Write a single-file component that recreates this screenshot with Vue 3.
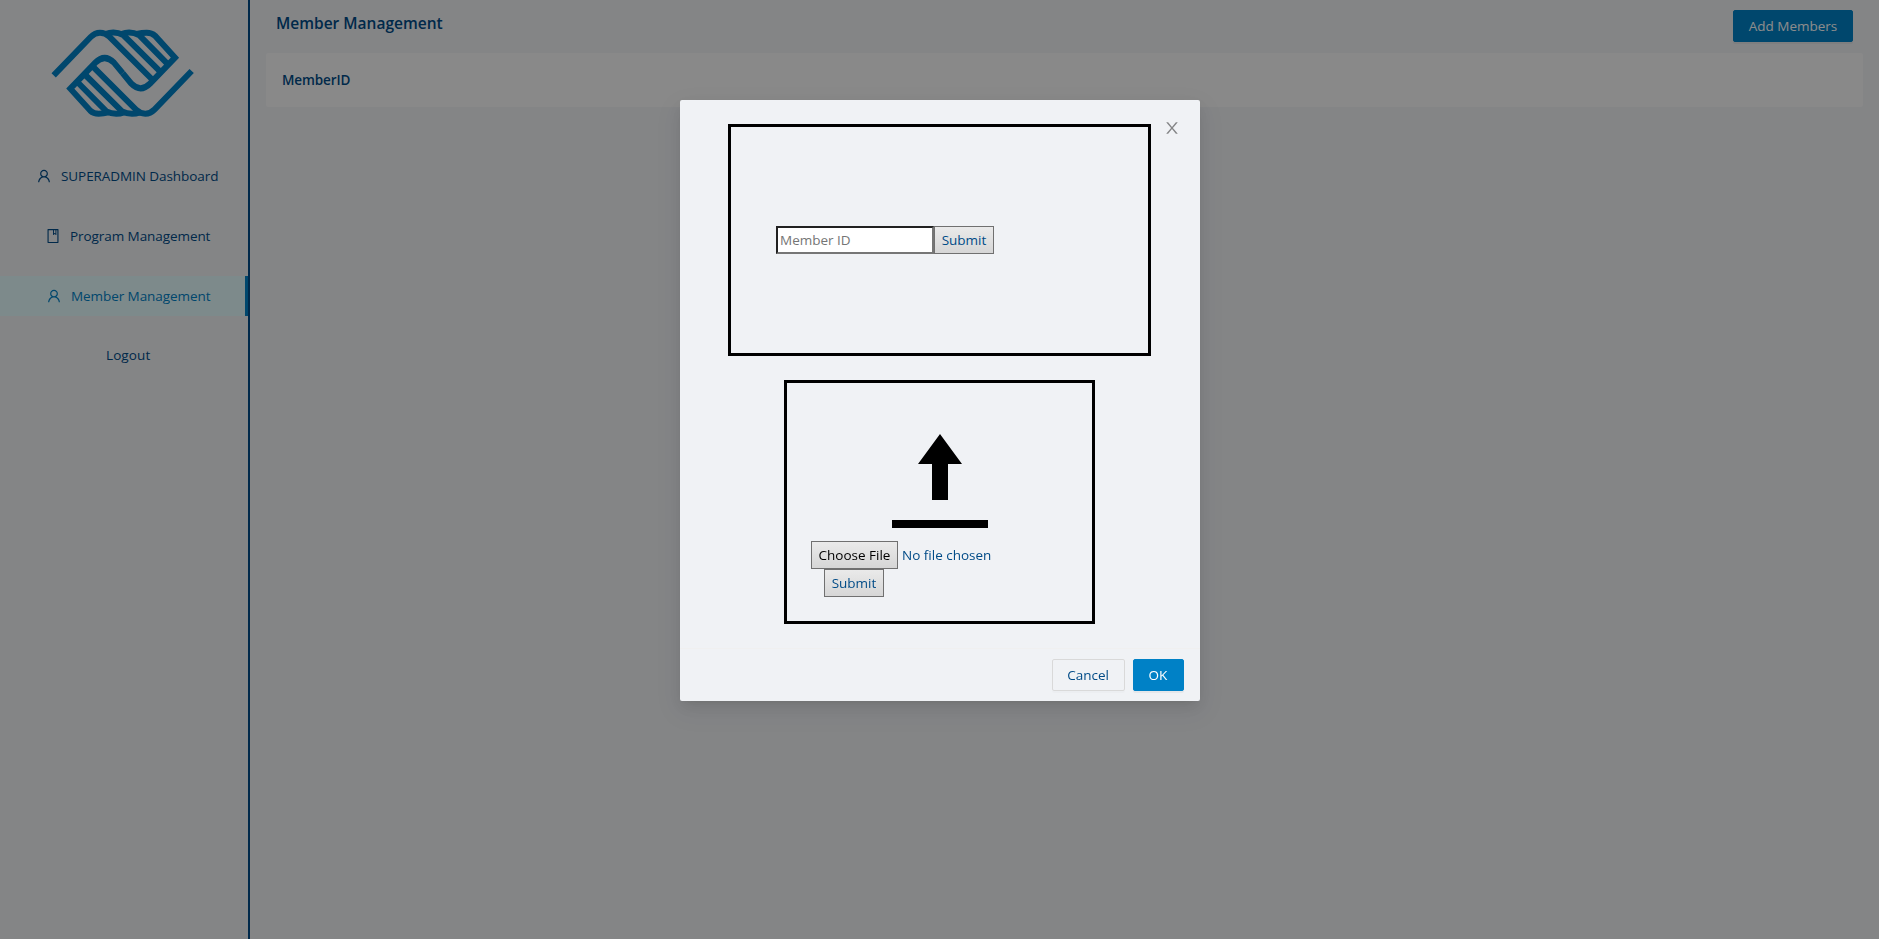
<script setup>
const navItems = [
  { label: 'SUPERADMIN Dashboard', icon: 'user', cls: 'dash' },
  { label: 'Program Management', icon: 'book', cls: 'prog' },
  { label: 'Member Management', icon: 'user', cls: 'memb', active: true },
  { label: 'Logout', cls: 'logout' },
]
</script>

<template>
  <div class="layout">
    <aside class="sider">
      <svg class="logo" viewBox="0 0 510 345" fill="none" stroke="#0081c6" stroke-width="18">
        <defs>
          <g id="hand">
            <path d="M41 181 L152 66 Q165 53 180 53 Q196 53 208 65 L335 192" />
            <path d="M196 57 Q224 47 250 60 L360 169" />
            <path d="M244 57 Q271 47 297 60 L384 148" />
            <path d="M290 57 Q306 53 320 53 Q335 53 345 62 L405 128 L330 206 Q302 234 274 206 L248 174.500" />
          </g>
        </defs>
        <use href="#hand" />
        <use href="#hand" transform="rotate(180 248 174.500)" />
      </svg>
      <nav class="menu">
        <a v-for="item in navItems" :key="item.label" class="item" :class="[item.cls, { active: item.active }]">
          <svg v-if="item.icon === 'user'" class="icon" viewBox="64 64 896 896" fill="currentColor">
            <path d="M858.500 763.600a374 374 0 0 0-80.600-119.500 375.630 375.630 0 0 0-119.500-80.600c-.4-.2-.8-.3-1.200-.5C719.500 518 760 444.700 760 362c0-137-111-248-248-248S264 225 264 362c0 82.700 40.500 156 102.800 201.100-.4.2-.8.3-1.200.5-44.800 18.900-85 46-119.500 80.600a375.630 375.630 0 0 0-80.600 119.500A371.700 371.700 0 0 0 136 901.800a8 8 0 0 0 8 8.200h60c4.400 0 7.900-3.500 8-7.800 2-77.200 33-149.500 87.800-204.300 56.700-56.700 132-87.900 212.200-87.900s155.500 31.200 212.200 87.900C779 752.700 810 825 812 902.200c.1 4.400 3.600 7.800 8 7.800h60a8 8 0 0 0 8-8.200c-1-47.800-10.900-94.300-29.500-138.200zM512 534c-45.900 0-89.100-17.900-121.600-50.400S340 407.900 340 362s17.900-89.100 50.400-121.600S466.100 190 512 190s89.100 17.900 121.600 50.400S684 316.100 684 362s-17.900 89.100-50.400 121.600S557.900 534 512 534z" />
          </svg>
          <svg v-else-if="item.icon === 'book'" class="icon" viewBox="64 64 896 896" fill="currentColor">
            <path d="M832 64H192c-17.700 0-32 14.300-32 32v832c0 17.700 14.300 32 32 32h640c17.700 0 32-14.300 32-32V96c0-17.700-14.300-32-32-32zm-260 72h96v209.900L621.500 312 572 347.400V136zm220 752H232V136h280v296.900c0 3.300 1 6.600 3 9.300a15.900 15.900 0 0 0 22.300 3.700l83.800-59.900 81.400 59.400c2.700 2 6 3.100 9.400 3.100 8.800 0 16-7.200 16-16V136h64v752z" />
          </svg>
          <span>{{ item.label }}</span>
        </a>
      </nav>
    </aside>

    <main class="main">
      <header class="header">
        <h1 class="title">Member Management</h1>
        <button class="btn primary add">Add Members</button>
      </header>
      <section class="table"><span class="th">MemberID</span></section>
    </main>

    <div class="mask">
      <div class="modal" role="dialog">
        <button class="close" aria-label="Close">
          <svg viewBox="64 64 896 896" fill="currentColor">
            <path d="M563.800 512l262.500-312.900c4.400-5.200.7-13.100-6.100-13.100h-79.800c-4.700 0-9.200 2.100-12.300 5.700L511.600 449.800 295.100 191.700c-3-3.600-7.500-5.700-12.300-5.700H203c-6.800 0-10.500 7.900-6.100 13.100L459.400 512 196.900 824.900A7.950 7.950 0 0 0 203 838h79.800c4.700 0 9.200-2.100 12.300-5.700l216.500-258.100 216.500 258.100c3 3.600 7.500 5.700 12.300 5.700h79.800c6.800 0 10.500-7.900 6.100-13.100L563.800 512z" />
          </svg>
        </button>
        <div class="body">
          <form class="id-box" @submit.prevent>
            <input class="id-input" type="text" placeholder="Member ID" />
            <button class="native submit">Submit</button>
          </form>
          <form class="file-box" @submit.prevent>
            <svg class="upload" viewBox="0 0 96 94">
              <path d="M48 0 70 30H56V66H40V30H26ZM0 86H96V94H0Z" />
            </svg>
            <div class="file-row">
              <button type="button" class="native choose">Choose File</button>
              <span class="nofile">No file chosen</span>
            </div>
            <button class="native submit second">Submit</button>
          </form>
        </div>
        <footer class="footer">
          <button class="btn cancel">Cancel</button>
          <button class="btn primary ok">OK</button>
        </footer>
      </div>
    </div>
  </div>
</template>

<style>
body { margin: 0; overflow: hidden; }
</style>

<style scoped>
.layout, .layout * { box-sizing: border-box; }
.layout {
  display: flex;
  height: 939px;
  background: #f0f2f5;
  color: #004b87;
  font: 13.5px/22px "Segoe UI", "Open Sans", "Noto Sans", sans-serif;
}
button, input { font: inherit; letter-spacing: inherit; margin: 0; white-space: nowrap; }

.sider { width: 250px; flex: none; border-right: 2px solid #004b87; }
.logo { display: block; width: 170px; height: 115px; margin: 15px 0 0 40px; }
.menu { display: flex; flex-direction: column; gap: 20px; margin-top: 26px; }
.item {
  display: flex;
  align-items: center;
  height: 40px;
  white-space: nowrap;
  letter-spacing: -.07px;
  border-right: 3px solid transparent;
}
.icon { width: 14px; height: 14px; margin-right: 10px; flex: none; }
.dash { padding-left: 37px; }
.prog { padding-left: 46px; }
.memb { padding-left: 47px; }
.logout { padding-left: 106px; margin-top: -1px; letter-spacing: .1px; }
.active { color: #0081c6; background: #e4fbfd; border-right-color: #0081c6; }

.main { flex: 1; padding: 0 16px; }
.header { display: flex; justify-content: space-between; height: 53px; padding: 10px 10px 0; }
.title { margin: 2px 0 0; font-size: 15.5px; line-height: 23px; font-weight: 600; }
.table {
  display: flex;
  align-items: center;
  height: 54px;
  padding: 0 16px;
  background: #fafafa;
  border-radius: 2px;
}
.th { font-weight: 600; letter-spacing: -.1px; }

.btn {
  height: 32px;
  padding: 0;
  border: 1px solid #d9d9d9;
  border-radius: 2px;
  background: #f0f2f5;
  color: #004b87;
  box-shadow: 0 2px 0 rgba(0, 0, 0, .016);
}
.primary { background: #0081c6; border-color: #0081c6; color: #fff; box-shadow: 0 2px 0 rgba(0, 0, 0, .045); }
.add { width: 120px; }
.cancel { width: 73px; }
.ok { width: 51px; }

.mask {
  position: fixed;
  inset: 0;
  padding-top: 100px;
  background: rgba(0, 0, 0, .45);
}
.modal {
  position: relative;
  width: 520px;
  height: 601px;
  margin: 0 auto;
  background: #f0f2f5;
  border-radius: 2px;
  box-shadow: 0 3px 6px -4px rgba(0, 0, 0, .12), 0 6px 16px rgba(0, 0, 0, .08), 0 9px 28px 8px rgba(0, 0, 0, .05);
}
.close {
  position: absolute;
  top: 0;
  right: 0;
  display: grid;
  place-items: center;
  width: 56px;
  height: 56px;
  padding: 0;
  border: 0;
  background: none;
  color: rgba(0, 0, 0, .45);
}
.close svg { width: 16px; height: 16px; }
.body {
  display: flex;
  flex-direction: column;
  align-items: center;
  gap: 24px;
  height: 548px;
  padding-top: 24px;
}
.id-box {
  display: flex;
  align-items: center;
  width: 423px;
  height: 232px;
  padding-left: 45px;
  border: 3px solid #000;
}
.id-input {
  width: 158px;
  height: 28px;
  padding: 1px 2px;
  border: 2px inset #767676;
  border-radius: 0;
  background: #fff;
}
.id-input::placeholder { color: #757575; }
.native {
  height: 28px;
  padding: 0;
  border: 1px solid #707070;
  border-radius: 0;
  background: linear-gradient(#eaeaea, #d6d6d6);
  color: #004b87;
}
.submit { width: 60px; }
.file-box {
  display: flex;
  flex-direction: column;
  width: 311px;
  height: 244px;
  padding: 51px 24px 0;
  border: 3px solid #000;
}
.upload { width: 96px; height: 94px; align-self: center; margin-bottom: 13px; }
.file-row { display: flex; align-items: center; gap: 4px; }
.choose { width: 87px; color: #000; }
.second { margin-left: 13px; }
.footer {
  display: flex;
  justify-content: flex-end;
  gap: 8px;
  padding: 10px 16px;
  border-top: 1px solid #f0f0f0;
}
</style>
